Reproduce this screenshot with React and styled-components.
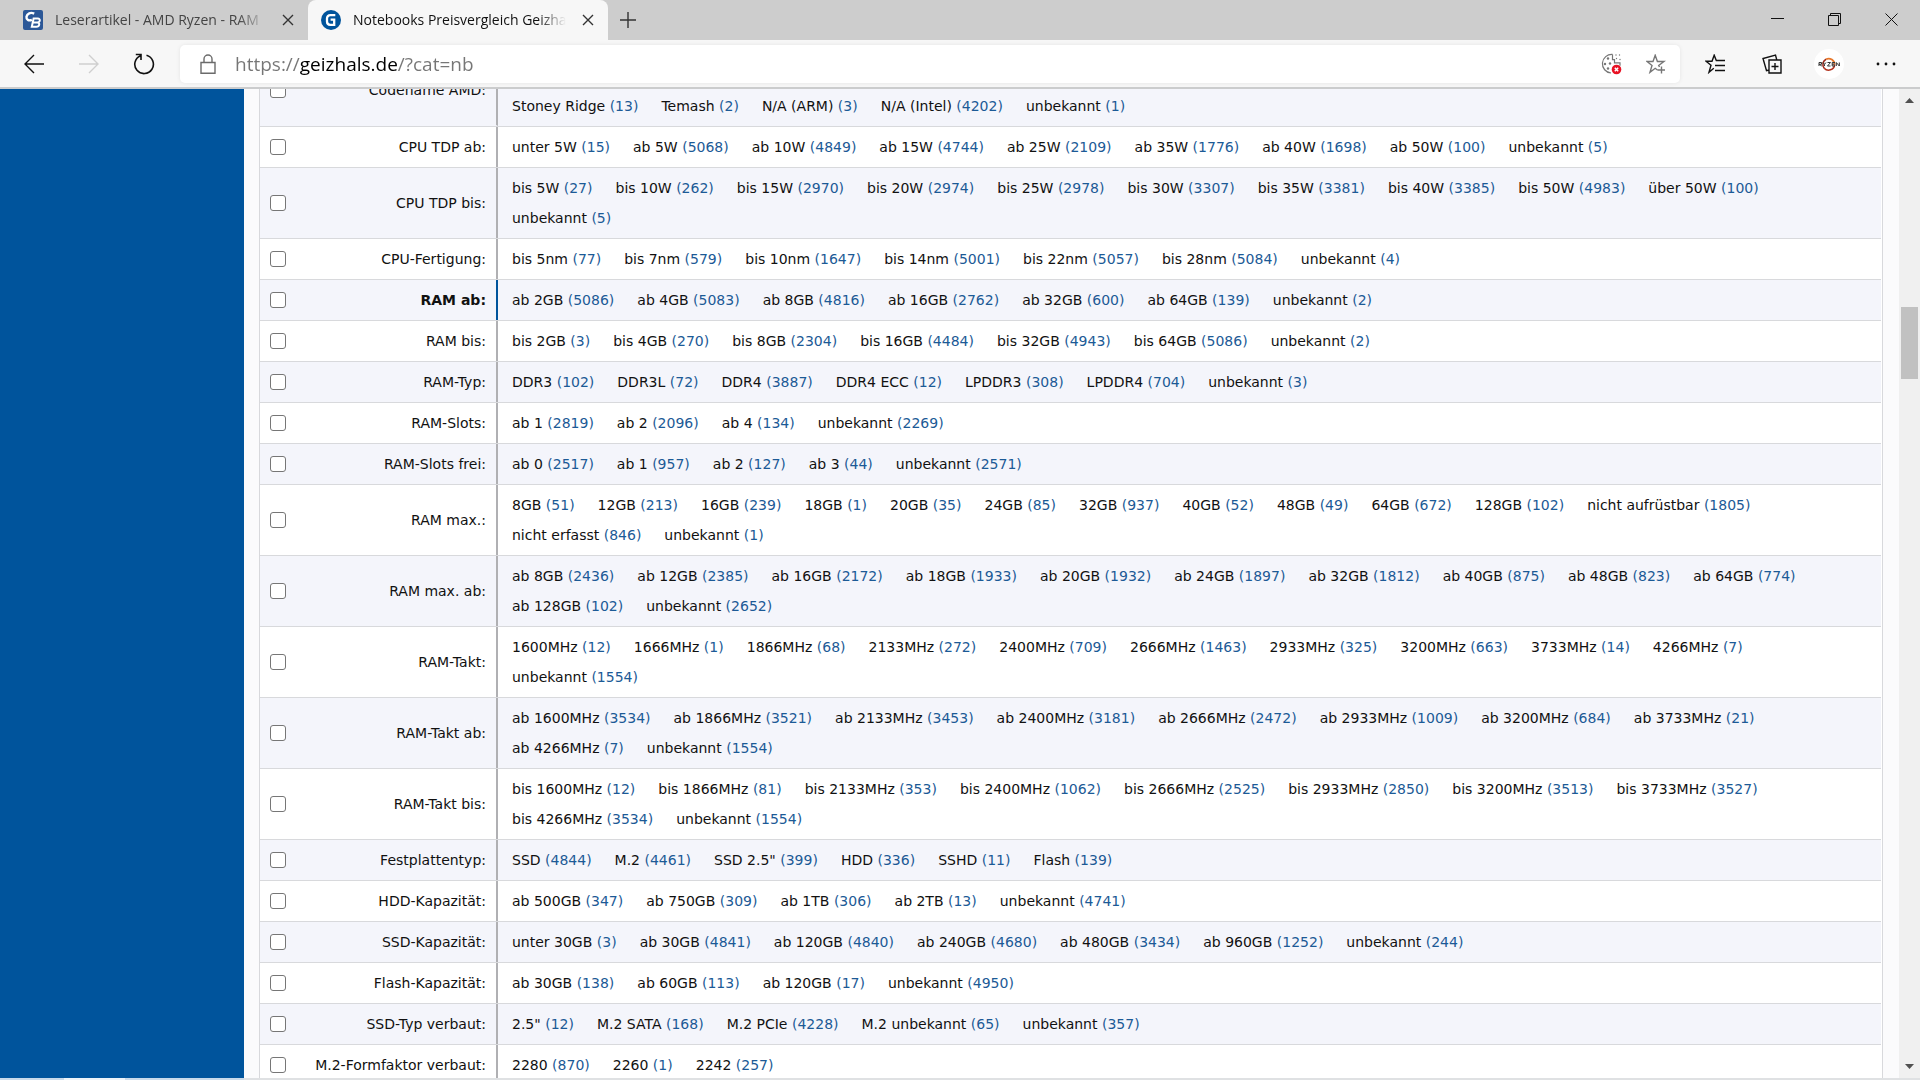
import styled, {createGlobalStyle} from "styled-components";
import {useState} from "react";

const colors = {
    blue: "#00549c",
    link: "#1c5a96",
    stripe: "#f4f5fb",
    line: "#d8d9dc",
    divider: "#b0b0b3",
    chrome: "#cdcdcd",
    toolbar: "#f7f7f7",
};

const GlobalStyle = createGlobalStyle`
    * {
        box-sizing: border-box;
    }
    body {
        margin: 0;
        overflow: hidden;
    }
    button {
        border: 0;
        padding: 0;
        background: none;
        display: flex;
        align-items: center;
        justify-content: center;
    }
    svg {
        display: block;
        flex: none;
    }
`;

const Window = styled.div`
    display: flex;
    flex-direction: column;
    height: 100vh;
    font-family: "Open Sans", "Noto Sans", sans-serif;
`;

const TabBar = styled.header`
    display: flex;
    flex: none;
    height: 40px;
    background: ${colors.chrome};
`;

const Tab = styled.div`
    display: flex;
    align-items: center;
    width: ${props => props.$active ? "300px" : "308px"};
    padding: 0 10px 0 ${props => props.$active ? "13px" : "23px"};
    border-radius: 8px 8px 0 0;
    background: ${props => props.$active ? colors.toolbar : "none"};
    color: ${props => props.$active ? "#111" : "#444"};
`;

const TabTitle = styled.span`
    flex: 1;
    margin: 0 12px;
    overflow: hidden;
    white-space: nowrap;
    font-size: 14px;
    line-height: 20px;
    mask-image: linear-gradient(to left, transparent, #000 28px);
`;

const TabButton = styled.button`
    width: 20px;
    height: 40px;
    color: #333;
`;

const NewTab = styled(TabButton)`
    width: 40px;
`;

const WindowButtons = styled.div`
    display: flex;
    margin-left: auto;
`;

const WindowButton = styled.button`
    width: 57px;
    height: 38px;
    color: #111;
`;

const Toolbar = styled.div`
    display: flex;
    align-items: center;
    flex: none;
    height: 49px;
    padding: 0 6px;
    border-bottom: 2px solid #cbcccd;
    background: ${colors.toolbar};
`;

const ToolButton = styled.button`
    width: 57px;
    height: 40px;
    color: ${props => props.disabled ? "#cfcfcf" : "#111"};
`;

const NavButton = styled(ToolButton)`
    width: 55px;
`;

const AddressBar = styled.div`
    display: flex;
    align-items: center;
    flex: 1;
    height: 38px;
    margin-right: 6px;
    margin-left: 9px;
    padding: 0 14px 0 20px;
    border-radius: 5px;
    background: #fff;
    box-shadow: 0 0 4px rgba(0, 0, 0, 0.08);
    color: #6b6b6b;
`;

/* host in black, the rest of the url in grey */
const Address = styled.input`
    flex: 1;
    min-width: 0;
    margin-left: 19px;
    padding: 0;
    border: 0;
    outline: 0;
    font-family: inherit;
    font-size: 19px;
    line-height: 28px;
    color: transparent;
    background: linear-gradient(to right, #767676 65px, #000 65px, #000 163px, #767676 163px);
    background-clip: text;
`;

const AddressButton = styled.button`
    width: 20px;
    height: 36px;
    margin-left: 25px;
    color: #767676;
`;

const Avatar = styled.span`
    display: flex;
    align-items: center;
    justify-content: center;
    width: 30px;
    height: 30px;
    border-radius: 50%;
    background: #fff;
`;

const Viewport = styled.div`
    display: flex;
    flex: 1;
    min-height: 0;
    background: #fbfbfc;
`;

const SideSpace = styled.aside`
    flex: none;
    width: 244px;
    background: ${colors.blue};
`;

const Panel = styled.main`
    flex: 1;
    min-width: 0;
    margin: 0 16px 0 15px;
    overflow: hidden;
    border: solid ${colors.line};
    border-width: 0 1px;
    padding-right: 1px;
    background: #fff;
`;

/* the list is scrolled, its first row is half under the toolbar */
const FilterTable = styled.table`
    width: 100%;
    margin-top: -34px;
    border-collapse: collapse;
    table-layout: fixed;
    font-family: "DejaVu Sans", Verdana, sans-serif;
    font-size: 14px;
    line-height: 30px;
    color: #111;
`;

const FilterRow = styled.tr`
    height: ${props => props.$tall ? "71px" : "41px"};
    background: ${props => props.$striped ? colors.stripe : "#fff"};
`;

const cell = `
    border-bottom: 1px solid ${colors.line};
`;

const LabelCell = styled.th`
    ${cell}
    width: 238px;
    padding: 0;
    font-weight: ${props => props.$active ? "bold" : "normal"};
`;

const LabelBox = styled.div`
    display: flex;
    align-items: center;
    justify-content: space-between;
    height: ${props => props.$tall ? "70px" : "40px"};
    padding: 0 10px;
    border-right: 2px solid ${props => props.$active ? colors.blue : colors.divider};
    margin-bottom: -1px;
    box-sizing: content-box;
    border-bottom: 1px solid transparent;
`;

const Checkbox = styled.input`
    appearance: none;
    width: 16px;
    height: 16px;
    margin: 0;
    border: 1px solid #767676;
    border-radius: 3px;
    background: #fff;
    &:checked {
        background: ${colors.blue};
    }
`;

const OptionCell = styled.td`
    ${cell}
    padding: 5px 14px;
    vertical-align: bottom;
`;

const Options = styled.div`
    display: flex;
    flex-wrap: wrap;
    column-gap: 23px;
`;

const Option = styled.a`
    color: inherit;
    text-decoration: none;
    white-space: nowrap;
    span {
        color: ${colors.link};
    }
`;

const Scrollbar = styled.div`
    display: flex;
    flex-direction: column;
    align-items: center;
    flex: none;
    width: 21px;
    background: #f0f0f0;
`;

const ScrollButton = styled.button`
    width: 21px;
    height: 23px;
    color: #505050;
`;

const ScrollTrack = styled.div`
    flex: 1;
    display: grid;
    grid-template-rows: 195fr 72fr 676fr;
`;

const ScrollThumb = styled.div`
    grid-row: 2;
    width: 17px;
    background: #c1c1c1;
`;

const Taskbar = styled.footer`
    flex: none;
    height: 2px;
    background: linear-gradient(to right, #c9daea 64px, #eef4f9 64px, #eef4f9 125px, #c9daea 125px, #c9daea 244px, #dfe1e3 244px);
`;

// each option is "name|count"
const filters = [
    {label: "Codename AMD:", tall: true, options: ["Stoney Ridge|13", "Temash|2", "N/A (ARM)|3", "N/A (Intel)|4202", "unbekannt|1"]},
    {label: "CPU TDP ab:", options: ["unter 5W|15", "ab 5W|5068", "ab 10W|4849", "ab 15W|4744", "ab 25W|2109", "ab 35W|1776", "ab 40W|1698", "ab 50W|100", "unbekannt|5"]},
    {label: "CPU TDP bis:", tall: true, options: ["bis 5W|27", "bis 10W|262", "bis 15W|2970", "bis 20W|2974", "bis 25W|2978", "bis 30W|3307", "bis 35W|3381", "bis 40W|3385", "bis 50W|4983", "über 50W|100", "unbekannt|5"]},
    {label: "CPU-Fertigung:", options: ["bis 5nm|77", "bis 7nm|579", "bis 10nm|1647", "bis 14nm|5001", "bis 22nm|5057", "bis 28nm|5084", "unbekannt|4"]},
    {label: "RAM ab:", active: true, options: ["ab 2GB|5086", "ab 4GB|5083", "ab 8GB|4816", "ab 16GB|2762", "ab 32GB|600", "ab 64GB|139", "unbekannt|2"]},
    {label: "RAM bis:", options: ["bis 2GB|3", "bis 4GB|270", "bis 8GB|2304", "bis 16GB|4484", "bis 32GB|4943", "bis 64GB|5086", "unbekannt|2"]},
    {label: "RAM-Typ:", options: ["DDR3|102", "DDR3L|72", "DDR4|3887", "DDR4 ECC|12", "LPDDR3|308", "LPDDR4|704", "unbekannt|3"]},
    {label: "RAM-Slots:", options: ["ab 1|2819", "ab 2|2096", "ab 4|134", "unbekannt|2269"]},
    {label: "RAM-Slots frei:", options: ["ab 0|2517", "ab 1|957", "ab 2|127", "ab 3|44", "unbekannt|2571"]},
    {label: "RAM max.:", tall: true, options: ["8GB|51", "12GB|213", "16GB|239", "18GB|1", "20GB|35", "24GB|85", "32GB|937", "40GB|52", "48GB|49", "64GB|672", "128GB|102", "nicht aufrüstbar|1805", "nicht erfasst|846", "unbekannt|1"]},
    {label: "RAM max. ab:", tall: true, options: ["ab 8GB|2436", "ab 12GB|2385", "ab 16GB|2172", "ab 18GB|1933", "ab 20GB|1932", "ab 24GB|1897", "ab 32GB|1812", "ab 40GB|875", "ab 48GB|823", "ab 64GB|774", "ab 128GB|102", "unbekannt|2652"]},
    {label: "RAM-Takt:", tall: true, options: ["1600MHz|12", "1666MHz|1", "1866MHz|68", "2133MHz|272", "2400MHz|709", "2666MHz|1463", "2933MHz|325", "3200MHz|663", "3733MHz|14", "4266MHz|7", "unbekannt|1554"]},
    {label: "RAM-Takt ab:", tall: true, options: ["ab 1600MHz|3534", "ab 1866MHz|3521", "ab 2133MHz|3453", "ab 2400MHz|3181", "ab 2666MHz|2472", "ab 2933MHz|1009", "ab 3200MHz|684", "ab 3733MHz|21", "ab 4266MHz|7", "unbekannt|1554"]},
    {label: "RAM-Takt bis:", tall: true, options: ["bis 1600MHz|12", "bis 1866MHz|81", "bis 2133MHz|353", "bis 2400MHz|1062", "bis 2666MHz|2525", "bis 2933MHz|2850", "bis 3200MHz|3513", "bis 3733MHz|3527", "bis 4266MHz|3534", "unbekannt|1554"]},
    {label: "Festplattentyp:", options: ["SSD|4844", "M.2|4461", "SSD 2.5\"|399", "HDD|336", "SSHD|11", "Flash|139"]},
    {label: "HDD-Kapazität:", options: ["ab 500GB|347", "ab 750GB|309", "ab 1TB|306", "ab 2TB|13", "unbekannt|4741"]},
    {label: "SSD-Kapazität:", options: ["unter 30GB|3", "ab 30GB|4841", "ab 120GB|4840", "ab 240GB|4680", "ab 480GB|3434", "ab 960GB|1252", "unbekannt|244"]},
    {label: "Flash-Kapazität:", options: ["ab 30GB|138", "ab 60GB|113", "ab 120GB|17", "unbekannt|4950"]},
    {label: "SSD-Typ verbaut:", options: ["2.5\"|12", "M.2 SATA|168", "M.2 PCIe|4228", "M.2 unbekannt|65", "unbekannt|357"]},
    {label: "M.2-Formfaktor verbaut:", options: ["2280|870", "2260|1", "2242|257"]},
];

const Icon = ({width = 20, height = 20, stroke = 1.4, children}) => (
    <svg width={width} height={height} viewBox={`0 0 ${width} ${height}`} fill="none" stroke="currentColor" strokeWidth={stroke} aria-hidden="true">
        {children}
    </svg>
);

const CloseIcon = () => <Icon width={12} height={12}><path d="M1 1l10 10M11 1L1 11"/></Icon>;

const ComputerBaseLogo = () => (
    <Icon>
        <rect width="20" height="20" rx="2" fill="#2b5797" stroke="none"/>
        <path d="M11.2 3.6C7.6 1.9 4.1 3.4 3.5 6.8c-.4 3 2.2 4.3 5.4 3.1" stroke="#fff" strokeWidth="2.4"/>
        <path d="M10.6 8.6h4.2c2.9 0 2.6 3.8-.6 3.8h-3.8 3.8c3.1 0 2.6 4.3-.9 4.3H8.8z" stroke="#fff" strokeWidth="2"/>
    </Icon>
);

const GeizhalsLogo = () => (
    <Icon>
        <circle cx="10" cy="10" r="10" fill={colors.blue} stroke="none"/>
        <path d="M14.3 5.2H9.4c-2.2 0-3.4 1.4-3.4 3.4v2.9c0 2.1 1.1 3.3 3.2 3.3h4V9.6H9.6" stroke="#fff" strokeWidth="2.3"/>
    </Icon>
);

const RyzenLogo = () => (
    <Icon width={22} height={16}>
        <path d="M6.2 12.2A6 6 0 0 1 8 3.2" stroke="#9c2a1c" strokeWidth="1.6"/>
        <path d="M8 3.2a6 6 0 0 1 8.6 5.6" stroke="#e8772a" strokeWidth="1.8"/>
        <path d="M16.6 8.8a6 6 0 0 1-10.4 3.4" stroke="#b3321e" strokeWidth="1.6"/>
        <path d="M1 10V6.5h2.5v1.8H1.2L3.8 10M5 6.5l1.5 1.8V10M8 6.5L6.5 8.3M9.5 6.5h3L9.5 10h3M17 6.5h-2.8V10H17M14.2 8.200h2.5M18.3 10V6.5l3 3.5V6.5" stroke="#333" strokeWidth="1"/>
    </Icon>
);

const App = () => {
    const [checked, setChecked] = useState({});
    const [address, setAddress] = useState("https://geizhals.de/?cat=nb");

    const handleCheck = (label) => {
        setChecked({...checked, [label]: !checked[label]});
    }

    return(
        <Window>
            <GlobalStyle />
            <TabBar>
                <Tab>
                    <ComputerBaseLogo />
                    <TabTitle>Leserartikel - AMD Ryzen - RAM</TabTitle>
                    <TabButton aria-label="Tab schließen"><CloseIcon /></TabButton>
                </Tab>
                <Tab $active>
                    <GeizhalsLogo />
                    <TabTitle>Notebooks Preisvergleich Geizhals</TabTitle>
                    <TabButton aria-label="Tab schließen"><CloseIcon /></TabButton>
                </Tab>
                <NewTab aria-label="Neuer Tab">
                    <Icon width={16} height={16}><path d="M8 0v16M0 8h16"/></Icon>
                </NewTab>
                <WindowButtons>
                    <WindowButton aria-label="Minimieren">
                        <Icon width={13} height={13} stroke={1}><path d="M0 5.5h13"/></Icon>
                    </WindowButton>
                    <WindowButton aria-label="Verkleinern">
                        <Icon width={13} height={13} stroke={1}><path d="M.5 2.5h10v10H.5zM2.5 2.5v-2h10v10h-2"/></Icon>
                    </WindowButton>
                    <WindowButton aria-label="Schließen">
                        <Icon width={13} height={13} stroke={1}><path d="M.5.5l12 12M12.5.5l-12 12"/></Icon>
                    </WindowButton>
                </WindowButtons>
            </TabBar>

            <Toolbar>
                <NavButton aria-label="Zurück">
                    <Icon><path d="M20 10H1M10 1L1 10l9 9"/></Icon>
                </NavButton>
                <NavButton aria-label="Vorwärts" disabled>
                    <Icon><path d="M0 10h19M10 1l9 9-9 9"/></Icon>
                </NavButton>
                <NavButton aria-label="Aktualisieren">
                    <Icon width={22} height={22} stroke={1.6}><path d="M13.5 2.3a9.3 9.3 0 1 1-6 .4M2.8 1.5H8v5.4"/></Icon>
                </NavButton>
                <AddressBar>
                    <Icon width={16} height={20}><path d="M1 8.5h14v10.8H1zM4 8.5V5a4 4 0 0 1 8 0v3.5"/></Icon>
                    <Address aria-label="Adresse" value={address} onChange={e => setAddress(e.target.value)} />
                    <AddressButton aria-label="Cookies blockiert">
                        <Icon width={22} height={22} stroke={1.2}>
                            <path d="M12.5 1.4A9.3 9.3 0 1 0 11 20M12.5 1.4v5.3h2v3.1h5.5v3"/>
                            <g fill="currentColor" stroke="none">
                                <circle cx="8" cy="5.5" r="1.2"/>
                                <circle cx="5" cy="11" r="1.2"/>
                                <circle cx="10" cy="10.5" r="1.2"/>
                                <circle cx="8" cy="15.5" r="1.2"/>
                                <circle cx="16" cy="2" r=".7"/>
                                <circle cx="19.5" cy="2" r=".7"/>
                                <circle cx="16.5" cy="5.5" r=".7"/>
                                <circle cx="20" cy="6.5" r=".7"/>
                            </g>
                            <circle cx="16.5" cy="16.5" r="4.8" fill="#e81123" stroke="none"/>
                            <path d="M14.8 14.8l3.4 3.4M18.2 14.8l-3.4 3.4" stroke="#fff" strokeWidth="1.5"/>
                        </Icon>
                    </AddressButton>
                    <AddressButton aria-label="Zu Favoriten hinzufügen">
                        <Icon><path d="M13.5 13l-.8-1.5 5.3-4h-6.6L9.2 1.3 7 7.5H1l5 4-2 6.8 5.2-4 2.6 1.9M15.5 12.5v7M12 16h7"/></Icon>
                    </AddressButton>
                </AddressBar>
                <ToolButton aria-label="Favoriten">
                    <Icon><path d="M20 6.5h-8.7L9.2 1.2 7 7.2H1l5 4.1-2 7 4.8-4M10 11.5h10M10 16.5h10"/></Icon>
                </ToolButton>
                <ToolButton aria-label="Sammlungen">
                    <Icon><path d="M7 6h12v13H7zM13 9v7M9.5 12.5h7M7 16l-2.5.6L1 4.5 13.5 1l1.3 5"/></Icon>
                </ToolButton>
                <ToolButton aria-label="Profil">
                    <Avatar><RyzenLogo /></Avatar>
                </ToolButton>
                <ToolButton aria-label="Einstellungen und mehr">
                    <Icon width={20} height={4}>
                        <g fill="currentColor" stroke="none">
                            <circle cx="2" cy="2" r="1.4"/>
                            <circle cx="10" cy="2" r="1.4"/>
                            <circle cx="18" cy="2" r="1.4"/>
                        </g>
                    </Icon>
                </ToolButton>
            </Toolbar>

            <Viewport>
                <SideSpace />
                <Panel>
                    <FilterTable>
                        <tbody>
                            {
                                filters.map( ({label, tall, active, options}, index) => (
                                    <FilterRow key={label} $tall={tall} $striped={index % 2 === 0}>
                                        <LabelCell scope="row" $active={active}>
                                            <LabelBox $tall={tall} $active={active}>
                                                <Checkbox
                                                    type="checkbox"
                                                    id={`filter-${index}`}
                                                    checked={!!checked[label]}
                                                    onChange={() => handleCheck(label)}
                                                />
                                                <label htmlFor={`filter-${index}`}>{label}</label>
                                            </LabelBox>
                                        </LabelCell>
                                        <OptionCell>
                                            <Options>
                                                {
                                                    options.map(option => {
                                                        const [name, count] = option.split("|");
                                                        return <Option key={name} href="#">{name} <span>({count})</span></Option>
                                                    })
                                                }
                                            </Options>
                                        </OptionCell>
                                    </FilterRow>
                                ))
                            }
                        </tbody>
                    </FilterTable>
                </Panel>
                <Scrollbar>
                    <ScrollButton aria-label="Nach oben">
                        <Icon width={9} height={5}><path d="M0 5l4.5-5L9 5z" fill="currentColor" stroke="none"/></Icon>
                    </ScrollButton>
                    <ScrollTrack><ScrollThumb /></ScrollTrack>
                    <ScrollButton aria-label="Nach unten">
                        <Icon width={9} height={5}><path d="M0 0h9L4.5 5z" fill="currentColor" stroke="none"/></Icon>
                    </ScrollButton>
                </Scrollbar>
            </Viewport>
            <Taskbar />
        </Window>
    )
}

export default App;
